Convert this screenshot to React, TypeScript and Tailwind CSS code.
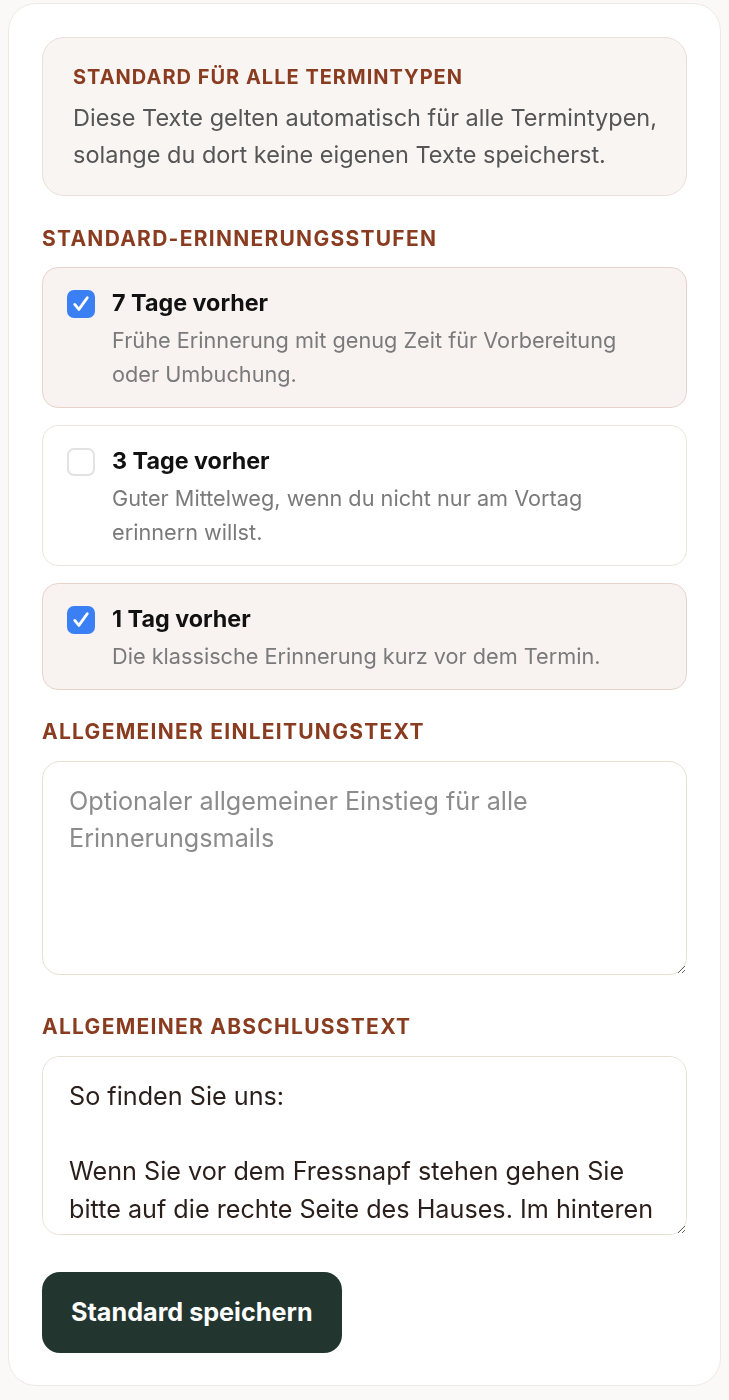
import { useState } from 'react';

const stages = [
  { id: 7, title: '7 Tage vorher', desc: 'Frühe Erinnerung mit genug Zeit für Vorbereitung oder Umbuchung.', checked: true },
  { id: 3, title: '3 Tage vorher', desc: 'Guter Mittelweg, wenn du nicht nur am Vortag erinnern willst.', checked: false },
  { id: 1, title: '1 Tag vorher', desc: 'Die klassische Erinnerung kurz vor dem Termin.', checked: true },
];

const closingText =
  'So finden Sie uns:\n\nWenn Sie vor dem Fressnapf stehen gehen Sie bitte auf die rechte Seite des Hauses. Im hinteren Bereich finden Sie unseren Eingang.';

function SectionLabel({ children }: { children: React.ReactNode }) {
  return (
    <h3 className="text-[21px] leading-[26px] font-bold tracking-[0.06em] text-[#8a3c20] uppercase">
      {children}
    </h3>
  );
}

function Checkbox({ checked }: { checked: boolean }) {
  if (checked) {
    return (
      <span className="mt-[3px] flex h-[28px] w-[28px] shrink-0 items-center justify-center rounded-[7px] bg-[#3b7ff5]">
        <svg width="20" height="20" viewBox="0 0 24 24" fill="none" stroke="white" strokeWidth="3.4" strokeLinecap="round" strokeLinejoin="round">
          <path d="M4.5 12.5l5 6L19.5 4.5" />
        </svg>
      </span>
    );
  }
  return <span className="mt-[3px] h-[28px] w-[28px] shrink-0 rounded-[7px] border-2 border-[#e2e2e2] bg-white" />;
}

export default function App() {
  const [items, setItems] = useState(stages);

  const toggle = (id: number) =>
    setItems(prev => prev.map(s => (s.id === id ? { ...s, checked: !s.checked } : s)));

  return (
    <div className="min-h-screen bg-[#fbf9f7] px-[8px] pt-[3px] font-['Inter',sans-serif]">
      <div className="rounded-[28px] border border-[#efe9e6] bg-white px-[33px] pt-[33px] pb-[32px]">
        {/* info box */}
        <div className="rounded-[22px] border border-[#ebdfda] bg-[#f9f5f3] pt-[26px] pr-[18px] pb-[22px] pl-[30px]">
          <p className="text-[20px] leading-[26px] font-bold tracking-[0.05em] text-[#8a3c20]">
            STANDARD FÜR ALLE TERMINTYPEN
          </p>
          <p className="mt-[9px] text-[23.5px] leading-[37px] text-[#555]">
            Diese Texte gelten automatisch für alle Termintypen, solange du dort keine eigenen Texte speicherst.
          </p>
        </div>

        <div className="mt-[30px]">
          <SectionLabel>Standard-Erinnerungsstufen</SectionLabel>
        </div>

        <div className="mt-[15px] flex flex-col gap-[17px]">
          {items.map(s => (
            <button
              key={s.id}
              onClick={() => toggle(s.id)}
              className={
                'flex gap-[17px] rounded-[16px] border pt-[19px] pr-[30px] pb-[16px] pl-[24px] text-left ' +
                (s.checked ? 'border-[#e6d3cc] bg-[#f8f3f1]' : 'border-[#ebe5e1] bg-white')
              }
            >
              <Checkbox checked={s.checked} />
              <div>
                <div className="text-[23.3px] leading-[32px] font-bold text-[#111]">{s.title}</div>
                <div className="mt-[4px] text-[21.7px] leading-[34px] text-[#7a7a7a]">{s.desc}</div>
              </div>
            </button>
          ))}
        </div>

        <div className="mt-[29px]">
          <SectionLabel>Allgemeiner Einleitungstext</SectionLabel>
        </div>
        <textarea
          className="mt-[16px] block h-[214px] w-full resize-y rounded-[18px] border border-[#e8dfd3] bg-white px-[26px] pt-[21px] text-[25.2px] leading-[37px] text-[#2a1f1a] outline-none placeholder:text-[#8c8c8c] [scrollbar-width:none]"
          placeholder="Optionaler allgemeiner Einstieg für alle Erinnerungsmails"
        />

        <div className="mt-[39px]">
          <SectionLabel>Allgemeiner Abschlusstext</SectionLabel>
        </div>
        <textarea
          className="mt-[16px] block h-[179px] w-full resize-y rounded-[18px] border border-[#e8dfd3] bg-white pt-[21px] pr-[20px] pl-[26px] text-[25.2px] leading-[37.5px] text-[#2a1f1a] outline-none [scrollbar-width:none]"
          defaultValue={closingText}
        />

        <button className="mt-[37px] h-[81px] rounded-[18px] bg-[#22352f] px-[29px] text-[25.2px] font-bold text-white">
          Standard speichern
        </button>
      </div>
    </div>
  );
}
